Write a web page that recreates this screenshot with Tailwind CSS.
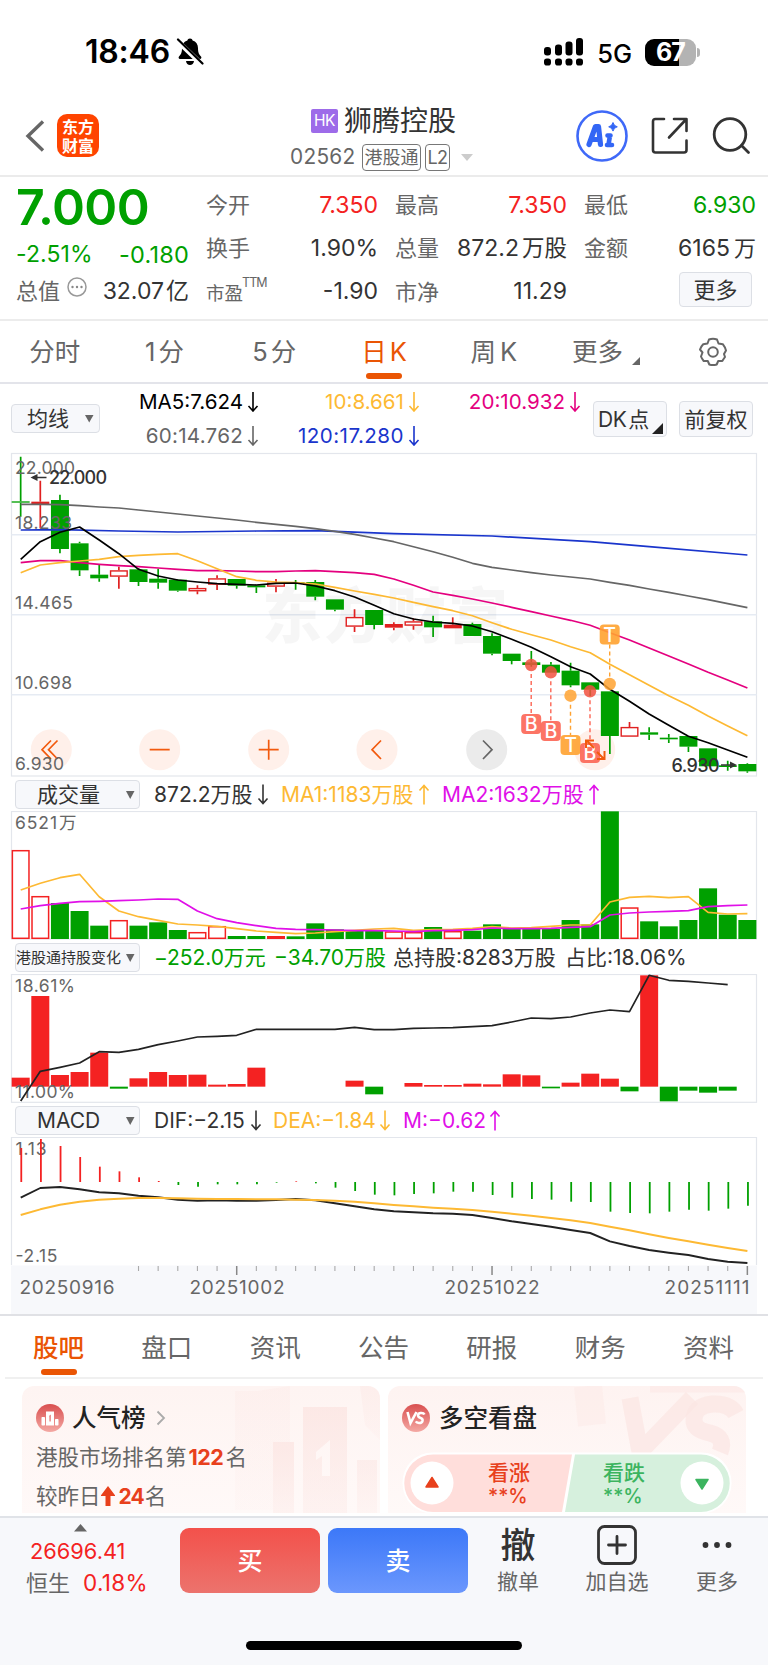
<!DOCTYPE html>
<html lang="zh-CN">
<head>
<meta charset="utf-8">
<title>狮腾控股 02562</title>
<script src="https://cdn.jsdelivr.net/npm/@tailwindcss/browser@4"></script>
</head>
<body class="bg-white">
<div class="w-[768px] h-[1665px] overflow-hidden flex flex-col bg-white font-['Inter','Noto_Sans_CJK_SC',sans-serif] text-[#333] leading-none whitespace-nowrap">

  <!-- status bar -->
  <div class="h-[104px] shrink-0 flex items-center pl-[85px] pr-[68px] text-black">
    <span class="text-[32px] font-semibold tracking-[-0.2px]">18:46</span>
    <svg class="ml-[6px]" width="28" height="30" viewBox="0 0 28 30"><path d="M14 1.500c1.500 0 2.400.9 2.600 2 3.500 1 5.400 3.900 5.400 7.500 0 5 1.200 6.500 3 8.600.8 1 .4 2.400-1 2.400H4c-1.400 0-1.800-1.400-1-2.400 1.800-2.100 3-3.600 3-8.600 0-3.600 1.900-6.500 5.400-7.500.2-1.100 1.100-2 2.600-2zM10 24h8c-.3 2.400-1.900 4-4 4s-3.700-1.600-4-4z"/><path d="M1 3.500l25 24" stroke="#fff" stroke-width="5"/><path d="M2 2.500l24.500 24" stroke="#000" stroke-width="2.200" stroke-linecap="round"/></svg>
    <svg class="ml-auto" width="40" height="28" viewBox="0 0 40 28"><rect x="0" y="9" width="7" height="8.500" rx="3"/><rect x="11" y="6.500" width="7" height="11" rx="3"/><rect x="21.500" y="3.500" width="7" height="14" rx="3"/><rect x="32" y="0" width="7" height="17.500" rx="3"/><rect x="0" y="20.500" width="7" height="7" rx="2.800"/><rect x="11" y="20.500" width="7" height="7" rx="2.800"/><rect x="21.500" y="20.500" width="7" height="7" rx="2.800"/><rect x="32" y="20.500" width="7" height="7" rx="2.800"/></svg>
    <span class="ml-[13px] mt-[3px] text-[25.500px] font-medium">5G</span>
    <div class="ml-[13px] w-[51px] h-[27px] rounded-[9px] bg-[linear-gradient(90deg,#000_67%,#b3b3b3_67%)] text-white text-[25px] font-bold flex items-center justify-center tracking-[-1px]">67</div>
    <div class="ml-[1px] w-[3px] h-[9px] rounded-r-full bg-[#b3b3b3]"></div>
  </div>

  <!-- title bar -->
  <div class="h-[73px] shrink-0 border-b-2 border-[#ebebeb] pb-2 flex items-center">
    <svg class="ml-[25px]" width="20" height="32" viewBox="0 0 20 32" fill="none" stroke="#666" stroke-width="3.400"><path d="M18 1.500L3 16l15 14.500"/></svg>
    <div class="ml-[12px] w-[42px] h-[43px] rounded-[10px] bg-[#ff4400] text-white text-[16px] font-bold leading-[18.500px] text-center flex flex-col justify-center font-['Noto_Sans_CJK_SC',sans-serif]"><span>东方</span><span>财富</span></div>
    <div class="ml-[192px] w-[184px] flex flex-col mt-[6px]">
      <div class="flex items-center pl-[20px] h-[28px] mt-[1px]">
        <span class="w-[27px] h-[24px] bg-[#9d6be9] rounded-[2px] text-white text-[15.500px] flex items-center justify-center tracking-[-0.5px]">HK</span>
        <span class="ml-[6px] text-[28px]">狮腾控股</span>
      </div>
      <div class="flex items-center h-[28px] mt-[9px] text-[#666]">
        <span class="w-[71px] text-[20.800px] tracking-[0.3px] -ml-[1px] mr-[1px]">02562</span>
        <span class="w-[59px] h-[27px] border border-[#777] rounded-[4px] text-[18px] flex items-center justify-center">港股通</span>
        <span class="ml-[4px] w-[25px] h-[27px] border border-[#777] rounded-[4px] text-[18px] flex items-center justify-center tracking-[-0.5px]">L2</span>
        <span class="ml-[11px] border-x-[6px] border-x-transparent border-t-[7px] border-t-[#ccc]"></span>
      </div>
    </div>
    <svg class="ml-[101px]" width="52" height="52" viewBox="0 0 52 52"><circle cx="26" cy="26" r="24.500" fill="#fff" stroke="#3f69f8" stroke-width="2.600"/><g stroke="#3366f5" stroke-linejoin="round" stroke-linecap="round" fill="none"><path d="M13 34.500L19.500 16.500h3L24.500 34.500M16 29.500h8" stroke-width="5.200"/><path d="M34 25.500L32.500 34.500M31.500 25.500h3M31 35h5" stroke-width="4.600"/></g><path d="M37 12.500q.8 3.600 4.300 4.300q-3.500.8-4.300 4.300q-.8-3.500-4.300-4.300q3.500-.7 4.300-4.300z" fill="#3366f5" stroke="#3366f5"/></svg>
    <svg class="ml-[23px]" width="38" height="38" viewBox="0 0 38 38" fill="none" stroke="#333" stroke-width="2.600" stroke-linecap="round" stroke-linejoin="round"><path d="M13 2H4.500Q2 2 2 4.500V33Q2 35.500 4.500 35.500H33Q35.500 35.500 35.500 33V23.500M23 2H35.500V14M35 2.500L18 20.500"/></svg>
    <svg class="ml-[23px]" width="39" height="38" viewBox="0 0 39 38" fill="none" stroke="#333" stroke-width="2.800" stroke-linecap="round"><circle cx="18" cy="17.500" r="15.800"/><path d="M29.500 28.500L36.500 35.500"/></svg>
  </div>

  <!-- quote summary -->
  <div class="h-[144px] shrink-0 border-b-2 border-[#ececec] flex pl-[16px] pr-[12px]">
    <div class="w-[172px] flex flex-col text-[23px]">
      <span class="mt-[5px] text-[50px] font-semibold text-[#00a000] tracking-[-0.600px]">7.000</span>
      <div class="mt-[11px] flex justify-between text-[#00a000]"><span class="tracking-[0.100px]">-2.51%</span><span class="text-[23.500px] tracking-[0.200px] -mr-[1px]">-0.180</span></div>
      <div class="mt-[13px] flex items-center"><span class="text-[22px] text-[#666]">总值</span>
        <svg class="ml-[7px] -mt-[8px]" width="20" height="20" viewBox="0 0 20 20" fill="#888"><circle cx="10" cy="10" r="9" fill="none" stroke="#999" stroke-width="1.500"/><circle cx="5.500" cy="10" r="1.200"/><circle cx="10" cy="10" r="1.200"/><circle cx="14.500" cy="10" r="1.200"/></svg>
        <span class="ml-auto text-[23px] -mr-[1px]">32.07<span class="ml-[2px]">亿</span></span></div>
    </div>
    <div class="ml-[18px] w-[550px] grid grid-cols-3 grid-rows-[44px_43px_41px] gap-x-[17px] pt-[6px] text-[23px]">
      <div class="flex items-center justify-between"><span class="text-[22px] text-[#666]">今开</span><span class="text-[#f42222]">7.350</span></div>
      <div class="flex items-center justify-between"><span class="text-[22px] text-[#666]">最高</span><span class="text-[#f42222]">7.350</span></div>
      <div class="flex items-center justify-between"><span class="text-[22px] text-[#666]">最低</span><span class="text-[#00a000]">6.930</span></div>
      <div class="flex items-center justify-between"><span class="text-[22px] text-[#666] -mt-[2px]">换手</span><span>1.90%</span></div>
      <div class="flex items-center justify-between"><span class="text-[22px] text-[#666] -mt-[2px]">总量</span><span>872.2<span class="ml-[3px] text-[22.500px]">万股</span></span></div>
      <div class="flex items-center justify-between"><span class="text-[22px] text-[#666] -mt-[2px]">金额</span><span>6165<span class="ml-[4px] text-[22px]">万</span></span></div>
      <div class="flex items-center justify-between pt-[2px]"><span class="text-[18.500px] text-[#666] flex pt-[3px]">市盈<span class="text-[12.500px] -mt-[7px] -ml-[1px] tracking-[-0.900px]">TTM</span></span><span>-1.90</span></div>
      <div class="flex items-center justify-between pt-[2px]"><span class="text-[22px] text-[#666]">市净</span><span>11.29</span></div>
      <div class="flex items-center justify-end pr-[4px]"><span class="w-[73px] h-[35px] -mt-[2px] rounded-[4px] border border-[#dcdfe5] bg-[#f7f8fb] flex items-center justify-center text-[22px]">更多</span></div>
    </div>
  </div>

  <!-- period tabs -->
  <div class="h-[63px] shrink-0 border-b-2 border-[#e3e4ea] grid grid-cols-7 text-[25.500px] text-[#666]">
    <div class="flex justify-center pt-[18px]">分时</div>
    <div class="flex justify-center pt-[18px] gap-[3px]"><span>1</span><span>分</span></div>
    <div class="flex justify-center pt-[18px] gap-[3px]"><span>5</span><span>分</span></div>
    <div class="flex flex-col items-center pt-[18px] text-[#ea5504]"><span>日<span class="ml-[3px]">K</span></span><span class="mt-[8px] w-[36px] h-[6px] rounded-full bg-[#ea5504]"></span></div>
    <div class="flex justify-center pt-[18px] gap-[4px]"><span>周</span><span>K</span></div>
    <div class="flex justify-center pt-[18px] pl-[5px]"><span>更多</span><svg class="ml-[9px] mt-[18px]" width="8" height="8"><path d="M8 0V8H0z" fill="#666"/></svg></div>
    <div class="flex justify-center pt-[16px]"><svg width="30" height="30" viewBox="0 0 30 30" fill="none" stroke="#666" stroke-width="2" stroke-linejoin="round"><path d="M11 2.500Q15 1 19 2.500L20.500 6.500L24.800 7.200Q27 10 28 13.500L26 17L27 20Q25.500 22 24.300 24L20.200 24L18.700 27.500Q15 28.700 11.300 27.500L9.800 24L5.700 24Q4 22 3 19.500L4.500 15.500L2 12.500Q3 9.500 5.200 7.200L9.500 6.500z"/><circle cx="15" cy="15" r="4.800"/></svg></div>
  </div>

  <!-- moving average legend -->
  <div class="h-[66px] shrink-0 flex pl-[11px] pr-[15px]">
    <div class="mt-[20px] w-[89px] h-[29px] rounded-[4px] border border-[#dcdfe5] bg-[#f7f8fb] flex items-center pl-[15px] text-[21px]">均线<svg class="ml-[16px]" width="9" height="8"><path d="M0 0H8.500L4.200 7.500z" fill="#666"/></svg></div>
    <div class="grid grid-cols-[159px_161px_161px] grid-rows-[34px_34px] text-[20.600px] mt-[1px] h-[68px]">
      <div class="flex items-center justify-end gap-[4px] text-black"><span>MA5:7.624</span><svg width="12" height="20" viewBox="0 0 12 20" fill="none" stroke="currentColor" stroke-width="1.600"><path d="M6 0V19M1.500 14L6 19L10.500 14"/></svg></div>
      <div class="flex items-center justify-end gap-[4px] text-[#fdb933]"><span>10:8.661</span><svg width="12" height="20" viewBox="0 0 12 20" fill="none" stroke="currentColor" stroke-width="1.600"><path d="M6 0V19M1.500 14L6 19L10.500 14"/></svg></div>
      <div class="flex items-center justify-end gap-[4px] text-[#e4007f]"><span>20:10.932</span><svg width="12" height="20" viewBox="0 0 12 20" fill="none" stroke="currentColor" stroke-width="1.600"><path d="M6 0V19M1.500 14L6 19L10.500 14"/></svg></div>
      <div class="flex items-center justify-end gap-[4px] text-[#666]"><span class="tracking-[0.250px]">60:14.762</span><svg width="12" height="20" viewBox="0 0 12 20" fill="none" stroke="currentColor" stroke-width="1.600"><path d="M6 0V19M1.500 14L6 19L10.500 14"/></svg></div>
      <div class="flex items-center justify-end gap-[4px] text-[#1a35cc]"><span class="tracking-[0.450px]">120:17.280</span><svg width="12" height="20" viewBox="0 0 12 20" fill="none" stroke="currentColor" stroke-width="1.600"><path d="M6 0V19M1.500 14L6 19L10.500 14"/></svg></div>
    </div>
    <div class="ml-auto mt-[17px] flex gap-[12px] text-[21px]">
      <div class="w-[74px] h-[36px] rounded-[4px] border border-[#dcdfe5] bg-[#f7f8fb] flex items-center pl-[4px] gap-[2px]"><span class="tracking-[-0.500px]">DK</span><span>点</span><svg class="mt-[18px] ml-[1px] shrink-0" width="11" height="11"><path d="M11 0V11H0z" fill="#222"/></svg></div>
      <div class="w-[74px] h-[36px] rounded-[4px] border border-[#dcdfe5] bg-[#f7f8fb] flex items-center justify-center">前复权</div>
    </div>
  </div>

  <!-- candlestick chart -->
  <svg id="kline" class="block shrink-0" width="768" height="328" viewBox="0 450 768 328"></svg>

  <!-- volume legend -->
  <div class="h-[33px] shrink-0 flex items-center pl-[15px] text-[21px]">
    <div class="w-[125px] h-[29px] rounded-[4px] border border-[#dcdfe5] bg-[#f7f8fb] flex items-center justify-between pl-[21px] pr-[4px]"><span>成交量</span><svg width="9" height="8"><path d="M0 0H8.500L4.200 8z" fill="#666"/></svg></div>
    <span class="ml-[14px] w-[97px]">872.2万股</span><svg class="ml-[6px]" width="12" height="21" viewBox="0 0 12 20" fill="none" stroke="#333" stroke-width="1.600"><path d="M6 0V19M1.500 14L6 19L10.500 14"/></svg>
    <span class="ml-[12px] w-[133px] text-[#fdb933]">MA1:1183万股</span><svg class="ml-[4px]" width="12" height="21" viewBox="0 0 12 20" fill="none" stroke="#fdb933" stroke-width="1.600"><path d="M6 20V1M1.500 6L6 1L10.500 6"/></svg>
    <span class="ml-[12px] w-[142px] text-[#e010e8]">MA2:1632万股</span><svg class="ml-[4px]" width="12" height="21" viewBox="0 0 12 20" fill="none" stroke="#e010e8" stroke-width="1.600"><path d="M6 20V1M1.500 6L6 1L10.500 6"/></svg>
  </div>
  <svg id="volume" class="block shrink-0" width="768" height="130" viewBox="0 811 768 130"></svg>

  <!-- southbound holdings legend -->
  <div class="h-[33px] shrink-0 flex items-center pl-[15px] text-[21px]">
    <div class="w-[125px] h-[29px] rounded-[4px] border border-[#dcdfe5] bg-[#f7f8fb] flex items-center justify-between pl-[0px] pr-[4px]"><span class="text-[15px]">港股通持股变化</span><svg width="9" height="8"><path d="M0 0H8.500L4.200 8z" fill="#666"/></svg></div>
    <span class="ml-[14px] w-[120px] text-[#00a000] tracking-[-0.080px]">−252.0万元</span>
    <span class="w-[119px] text-[#00a000]">−34.70万股</span>
    <span class="w-[172px]">总持股:8283万股</span>
    <span>占比:18.06%</span>
  </div>
  <svg id="holding" class="block shrink-0" width="768" height="130" viewBox="0 974 768 130"></svg>

  <!-- MACD legend -->
  <div class="h-[33px] shrink-0 flex items-center pl-[15px] text-[21px]">
    <div class="w-[125px] h-[29px] rounded-[4px] border border-[#dcdfe5] bg-[#f7f8fb] flex items-center justify-between pl-[21px] pr-[4px]"><span>MACD</span><svg width="9" height="8"><path d="M0 0H8.500L4.200 8z" fill="#666"/></svg></div>
    <span class="ml-[14px] w-[91px]">DIF:−2.15</span><svg class="ml-[5px]" width="12" height="21" viewBox="0 0 12 20" fill="none" stroke="#333" stroke-width="1.600"><path d="M6 0V19M1.500 14L6 19L10.500 14"/></svg>
    <span class="ml-[11px] w-[102px] text-[#fdb933]">DEA:−1.84</span><svg class="ml-[4px]" width="12" height="21" viewBox="0 0 12 20" fill="none" stroke="#fdb933" stroke-width="1.600"><path d="M6 0V19M1.500 14L6 19L10.500 14"/></svg>
    <span class="ml-[12px] w-[82px] text-[#e010e8]">M:−0.62</span><svg class="ml-[4px]" width="12" height="21" viewBox="0 0 12 20" fill="none" stroke="#e010e8" stroke-width="1.600"><path d="M6 20V1M1.500 6L6 1L10.500 6"/></svg>
  </div>
  <svg id="macd" class="block shrink-0" width="768" height="177" viewBox="0 1137 768 177"></svg>

  <!-- section tabs -->
  <div class="h-[63px] shrink-0 border-t-2 border-[#e0e1e5] flex justify-between pl-[33px] pr-[34px] pt-[19px] text-[25.500px] text-[#666]">
    <div class="flex flex-col items-center text-[#ea5504] font-medium"><span>股吧</span><span class="mt-[8px] w-[36px] h-[6px] rounded-full bg-[#ea5504]"></span></div>
    <span>盘口</span><span>资讯</span><span>公告</span><span>研报</span><span>财务</span><span>资料</span>
  </div>
  <div class="h-[2px] shrink-0 mx-[5px] bg-[#f0f0f0]"></div>

  <!-- cards -->
  <div class="h-[137px] shrink-0 flex gap-[8px] pl-[22px] pr-[22px] pt-[7px] pb-[3px]">
    <div class="relative w-[358px] rounded-t-[12px] overflow-hidden bg-[linear-gradient(#fef4f2,#fff9f8)] pl-[14px] pt-[18px]">
      <svg class="absolute inset-0" width="358" height="127" viewBox="22 1386 358 127"><defs><linearGradient id="fa" x1="0" y1="0" x2="0" y2="1"><stop offset="0" stop-color="#fbe3e0" stop-opacity=".7"/><stop offset="1" stop-color="#fbe3e0" stop-opacity=".3"/></linearGradient></defs><g fill="url(#fa)"><path d="M257 1391L290 1386V1442H273V1510H235V1391z" opacity=".35"/><rect x="273" y="1442" width="21" height="72"/><path d="M303 1407H347V1513H303zM316 1452L330 1440V1476H322V1456L316 1460z" fill-rule="evenodd"/><rect x="357" y="1460" width="20" height="54" opacity=".7"/><path d="M360 1386H380V1440L365 1425z" opacity=".5"/></g></svg>
      <div class="relative flex items-center h-[28px]">
        <svg width="28" height="28" viewBox="0 0 28 28"><defs><linearGradient id="ic" x1="0" y1="0" x2="0" y2="1"><stop offset="0" stop-color="#d94f4f"/><stop offset="1" stop-color="#f4a9a4"/></linearGradient></defs><circle cx="14" cy="14" r="14" fill="url(#ic)"/><g fill="#fff"><rect x="5.500" y="13" width="3.500" height="8.500" rx=".8"/><path d="M10 7.500H18V21.500H10zM13 12L14.800 10.500V17.500H13.400V12.500z" fill-rule="evenodd"/><rect x="19" y="15" width="3.500" height="6.500" rx=".8"/></g></svg>
        <span class="ml-[8px] text-[24.500px] font-medium text-[#222]">人气榜</span>
        <svg class="ml-[10px]" width="10" height="16" viewBox="0 0 10 16" fill="none" stroke="#aaa" stroke-width="1.800"><path d="M1.500 1.500L8 8L1.500 14.500"/></svg>
      </div>
      <div class="relative mt-[15px] text-[21.500px] text-[#666]">港股市场排名第<span class="font-bold text-[#e8401c] text-[21.500px] ml-[2px] mr-[2px] tracking-[-0.500px]">122</span>名</div>
      <div class="relative mt-[17px] flex items-center text-[21.500px] text-[#666]">较昨日<svg width="14" height="20" viewBox="0 0 14 20" fill="#e8401c"><path d="M7 0L14.500 10H9.500V20H4.500V10H-.5z"/></svg><span class="ml-[4px] font-bold text-[#e8401c] text-[21px] mr-[1px] tracking-[-1px]">24</span>名</div>
    </div>
    <div class="relative w-[358px] rounded-t-[12px] overflow-hidden bg-[linear-gradient(#fef3f1,#fff9f8)] pl-[14px] pt-[18px]">
      <svg class="absolute inset-0" width="358" height="127" viewBox="388 1386 358 127"><g fill="none" stroke="#fbe6e3"><path d="M630 1398L640 1452L692 1398" stroke-width="17" opacity=".7"/><path d="M736 1414Q730 1403 712 1404Q694 1406 694 1420Q694 1430 710 1433Q726 1437 720 1452" stroke-width="17" opacity=".7"/><path d="M588 1386L592 1425" stroke-width="28" opacity=".35"/><path d="M650 1388H746" stroke-width="9" opacity=".5"/></g></svg>
      <div class="relative flex items-center h-[28px]">
        <svg width="28" height="28" viewBox="0 0 28 28"><circle cx="14" cy="14" r="14" fill="url(#ic)"/><g fill="none" stroke="#fff" stroke-width="2.600"><path d="M5.500 8L8.500 19L14.500 8"/><path d="M22.500 10.500Q21.500 8.600 18.500 9Q15.600 9.600 16 11.800Q16.300 13.300 18.600 13.900Q21 14.600 20.500 16.800Q19.800 19.200 17 19Q14.700 18.800 13.800 17.300"/></g></svg>
        <span class="ml-[9px] text-[24.500px] font-medium text-[#222]">多空看盘</span>
      </div>
      <div class="relative mt-[20px] w-[330px] h-[62px]">
        <svg class="absolute inset-0" width="330" height="62" viewBox="402 1452 330 62"><rect x="402.500" y="1452.500" width="329" height="61" rx="30" fill="#fff"/><path d="M433 1454.500H572L562 1512H433A28.700 28.700 0 0 1 433 1454.500z" fill="#ffdedb"/><path d="M575 1454.500H701A28.700 28.700 0 0 1 701 1512H565z" fill="#d6f0dd"/><circle cx="432" cy="1483" r="21.500" fill="#fff"/><circle cx="702" cy="1483" r="21.500" fill="#fff"/><path d="M432 1477.500L438 1487H426z" fill="#e8401c" stroke="#e8401c" stroke-width="1.500" stroke-linejoin="round"/><path d="M702 1489L708 1479.500H696z" fill="#3cb45f" stroke="#3cb45f" stroke-width="1.500" stroke-linejoin="round"/></svg>
        <div class="relative grid grid-cols-2 text-[21px] pt-[10px] font-medium">
          <div class="pl-[86px] text-[#e8401c]"><div>看涨</div><div class="mt-[4px] text-[19.500px]">**%</div></div>
          <div class="pl-[36px] text-[#3cb45f]"><div>看跌</div><div class="mt-[4px] text-[19.500px]">**%</div></div>
        </div>
      </div>
    </div>
  </div>

  <!-- bottom bar -->
  <div class="h-[149px] shrink-0 border-t-2 border-[#e0e3e8] bg-[#f7f8fb] flex flex-col">
    <div class="flex h-[123px] items-start">
      <div class="w-[180px] pt-[6px] flex flex-col text-[#f42222] text-[21.800px]">
        <svg class="ml-[74px]" width="13" height="8"><path d="M6.500 0L13 7.500H0z" fill="#666"/></svg>
        <span class="mt-[9px] ml-[30px]">26696.41</span>
        <div class="mt-[9px] ml-[26px] flex"><span class="text-[#666] text-[22px] w-[57px]">恒生</span><span class="text-[22.500px] tracking-[0.300px]">0.18%</span></div>
      </div>
      <div class="mt-[10px] w-[140px] h-[65px] rounded-[9px] bg-[linear-gradient(#f3514b,#ec736d)] text-white text-[25px] font-medium flex items-center justify-center pt-[2px]">买</div>
      <div class="mt-[10px] ml-[8px] w-[140px] h-[65px] rounded-[9px] bg-[linear-gradient(#3c78f8,#6b97fd)] text-white text-[25px] font-medium flex items-center justify-center pt-[2px]">卖</div>
      <div class="ml-[29px] w-[42px] pt-[10px] flex flex-col items-center text-[21px] text-[#666]"><span class="text-[35px] font-medium text-[#333]">撤</span><span class="mt-[8px]">撤单</span></div>
      <div class="ml-[46px] w-[64px] pt-[7px] flex flex-col items-center text-[21px] text-[#666]"><svg width="40" height="40" viewBox="0 0 40 40" fill="none" stroke="#333" stroke-width="2.800" stroke-linecap="round"><rect x="1.500" y="1.500" width="37" height="37" rx="6"/><path d="M11.500 20h17M20 11.500v17"/></svg><span class="mt-[6px]">加自选</span></div>
      <div class="ml-[47px] w-[42px] pt-[7px] flex flex-col items-center text-[21px] text-[#666]"><svg width="40" height="40" viewBox="0 0 40 40" fill="#333"><circle cx="8.500" cy="20" r="2.900"/><circle cx="20" cy="20" r="2.900"/><circle cx="31.500" cy="20" r="2.900"/></svg><span class="mt-[6px]">更多</span></div>
    </div>
    <div class="mx-auto w-[276px] h-[9px] rounded-full bg-black"></div>
  </div>
</div>

<script>
const G = '#00a000', R = '#e02020', HOT = '#f42222';
const x = i => 20.67 + 19.64 * i;
const py = (base, v) => base + v / 3;
const path = (base, pts, color, w = 1.7) =>
  `<polyline points="${pts.map(([i, v]) => x(i).toFixed(1) + ',' + py(base, v).toFixed(1)).join(' ')}" fill="none" stroke="${color}" stroke-width="${w}" stroke-linejoin="round"/>`;
const seq = a => a.map((v, i) => [i, v]);
const label = (s, lx, y, len, color = '#666', size = 17.5, extra = '') =>
  `<text x="${lx}" y="${y}" font-size="${size}" fill="${color}" textLength="${len}" ${extra}>${s}</text>`;
const frame = (y1, y2) => `<rect x="11.5" y="${y1}" width="745" height="${y2 - y1}" fill="none" stroke="#e3e6ec" stroke-width="1.2"/>`;

/* ---- candlesticks: [kind, high, top, bottom, low] ---- */
const candles = [['g',20,154,158,200],['s',92,155,162,235],['g',134,150,297,310],['g',275,280,361,378],['g',345,374,385,395],['r',350,361,380,416],['g',355,358,396,408],['g',356,386,398,416],['g',388,389,422,425],['r',406,414,424,433],['r',376,385,404,420],['g',387,387,407,416],['g',405,406,412,429],['r',387,398,410,427],['g',390,397,400,419],['g',390,396,440,451],['g',448,448,479,484],['r',478,501,530,546],['g',480,480,525,538],['s',517,522,533,541],['r',505,514,527,539],['g',497,514,532,561],['s',502,524,535,535],['g',518,522,558,558],['g',550,558,611,616],['g',611,611,633,643],['g',603,637,645,650],['g',636,644,668,668],['g',638,662,706,712],['g',697,697,719,738],['g',724,724,858,912],['r',816,831,860,860],['g',832,847,854,870],['g',852,863,868,879],['g',858,858,890,906],['g',895,895,949,949],['g',932,946,951,962],['g',940,942,964,968]];
const ma5 = [328,275,247,231,270,311,358,378,390,396,401,403,405,400,399,408,422,441,466,491,507,516,520,528,545,568,592,620,650,672,718,754,792,826,859,878,900,922];
const ma10 = [368,345,338,333,328,320,316,313,311,332,356,380,391,396,398,402,412,423,433,444,457,470,482,497,518,538,554,570,590,608,643,674,706,737,766,798,828,857];
const ma20 = [338,332,332,338,343,347,350,354,358,362,362,363,365,365,363,362,365,368,373,387,406,426,436,447,459,472,485,498,511,526,548,570,594,618,642,667,690,714];
const ma60 = [163,163,164,167,171,174,180,186,192,198,204,210,217,223,229,236,244,253,264,275,290,305,322,340,352,360,368,375,381,387,397,406,417,427,438,449,461,473];
const ma120 = [[0,240],[2,239],[5,243],[8,246],[12,243],[15,242],[19,251],[24,258],[29,275],[32,290],[37,315]];
let k = frame(453.5, 776) + '<path d="M11.5 534.7H756.5M11.500 614.700H756.500M11.500 694.700H756.500" stroke="#e6ebf3" stroke-width="1.6"/>';
k += '<text x="262" y="638" font-size="60" font-weight="900" fill="#000" fill-opacity=".035" textLength="246">东方财富</text>';
[51.3,159.7,268.7,377].forEach(cx => k += `<circle cx="${cx}" cy="749.7" r="20.5" fill="#fff0ea"/>`);
k += '<circle cx="486.7" cy="749.7" r="20.500" fill="#ebebeb"/><circle cx="594.7" cy="749.7" r="20.500" fill="#fff0ea"/>';
k += '<g fill="none" stroke="#f25a0e" stroke-width="1.7"><path d="M51 740.500L42 749.700L51 759M57.500 740.500L48.500 749.700L57.500 759M149.700 749.700H169.700M258.700 749.700H278.700M268.700 739.700V759.700M381 740.500L372 749.700L381 759"/></g><path d="M483 740.500L492 749.700L483 759" fill="none" stroke="#666" stroke-width="1.7"/>';
candles.forEach(([t, h, a, b, l], i) => {
  const c = t === 'g' ? G : R, X = x(i), A = py(450, a), B = py(450, b), H = py(450, h), L = py(450, l);
  k += `<path d="M${X} ${H}V${A}M${X} ${B}V${L}" stroke="${c}" stroke-width="1.7"/>`;
  k += t === 'r'
    ? `<rect x="${X - 8.300}" y="${A + .6}" width="16.600" height="${Math.max(B - A - 1.2, 1)}" fill="#fff" stroke="${c}" stroke-width="1.400"/>`
    : `<rect x="${X - 9}" y="${A}" width="18" height="${B - A}" fill="${c}"/>`;
});
k += path(450, ma120, '#1a35cc') + path(450, seq(ma60), '#666') + path(450, seq(ma20), '#e4007f') + path(450, seq(ma10), '#fdb933') + path(450, seq(ma5), '#000');
k += label('22.000', 15, 473.5, 60) + label('18.233', 15, 528.700, 57) + label('14.465', 15, 608.700, 58) + label('10.698', 15, 689.300, 57) + label('6.930', 15, 770, 49);
k += label('22.000', 49, 484, 58, '#333', 18, 'font-weight="500"') + '<path d="M33 477.500H46.500" stroke="#333" stroke-width="1.500"/><path d="M30.500 477.500L37.500 474V481z" fill="#333"/>';
k += label('6.930', 671.500, 771.500, 48, '#333', 18, 'font-weight="500"') + '<path d="M721 765H734" stroke="#333" stroke-width="1.500"/><path d="M737 765L730 761.500V768.500z" fill="#333"/>';
/* trade markers: [letter, x, dotY, boxY] */
[['B',531.2,665,724],['B',550.8,672.300,731],['T',570.5,695.700,745],['T',609.7,684,634.500],['B',590,691.300,753]].forEach(([s, mx, d, b]) => {
  const c = s === 'B' ? '#fc6554' : '#ffa230';
  const y1 = b > d ? d + 9 : b + 10, y2 = b > d ? b - 10 : d - 6;
  k += `<path d="M${mx} ${y1}V${y2}" stroke="${c}" stroke-width="1.4" stroke-dasharray="4 3"/><circle cx="${mx}" cy="${d}" r="6.2" fill="${s === 'B' ? '#f25140' : '#ffa230'}" fill-opacity=".85"/><rect x="${mx - 10}" y="${b - 10}" width="20" height="20" rx="4" fill="${c}" fill-opacity=".9"/><text x="${mx}" y="${b + 7}" font-size="19.500" font-weight="500" fill="#fff" text-anchor="middle">${s}</text>`;
});
k += '<g fill="none" stroke="#f25a0e" stroke-width="2"><path d="M594 748L586.500 740.500M586 748V740.500H594M597 752L604 759M604.500 751V759H597"/></g>';
document.getElementById('kline').innerHTML = k;

/* ---- volume ---- */
const vol = ['r240','r378','g399','g423','g467','r450','g467','g457','g480','r486','r468','g498','g498','s498','g499','g460','g478','g483','g483','r484','r486','g471','r483','g482','g463','g477','g477','g477','g450','g463','g124','r412','g454','g469','g450','g355','g434','g450'];
let v = frame(811.5, 939);
vol.forEach((s, i) => {
  const t = s[0], y = py(770, +s.slice(1)), h = 939 - y;
  v += t === 'r' ? `<rect x="${x(i) - 8.300}" y="${y + .7}" width="16.600" height="${h - 1.4}" fill="#fff" stroke="${HOT}" stroke-width="1.500"/>`
    : `<rect x="${x(i) - 9}" y="${y}" width="18" height="${h}" fill="${t === 'g' ? G : HOT}"/>`;
});
v += path(770, seq([360,340,323,313,380,423,440,451,462,465,469,476,483,487,491,489,485,481,477,475,481,479,478,475,470,474,473,469,465,465,396,382,379,383,380,427,432,431]), '#fdb933');
v += path(770, seq([417,407,400,395,394,392,390,387,388,423,446,458,467,475,478,479,480,482,482,483,485,482,481,479,474,476,476,475,472,470,435,429,426,424,422,410,407,405]), '#e010e8');
v += label('6521', 15, 829, 42) + label('万', 59, 829, 17);
document.getElementById('volume').innerHTML = v;

/* ---- southbound holding change ---- */
const hold = [413,168,405,396,338,446,415,396,405,404,434,432,383,0,0,0,0,422,463,0,429,435,435,431,433,403,406,445,428,401,416,454,106,484,452,458,452];
let o = frame(974.5, 1102.3);
hold.forEach((z, i) => {
  if (!z) return;
  const up = z < 440, y = py(940, up ? z : 440);
  o += `<rect x="${x(i) - 9}" y="${y}" width="18" height="${Math.abs(z - 440) / 3}" fill="${up ? HOT : G}"/>`;
});
o += label('18.61%', 15, 992, 60) + label('11.00%', 15, 1098, 60);
o += path(940, seq([483,394,382,369,335,337,328,314,303,291,289,286,268,268,268,268,268,262,269,269,265,264,263,260,257,246,234,236,231,219,210,215,106,121,124,129,134]), '#222');
document.getElementById('holding').innerHTML = o;

/* ---- MACD ---- */
const bars = [114,87,108,141,170,184,202,213,225,230,223,223,223,218,214,220,233,243,254,256,252,250,245,245,255,263,267,269,275,276,305,309,310,305,299,302,296,287];
let m = '<rect x="11" y="1265.500" width="746" height="49" fill="#f7f8fb"/><path d="M11.500 1265V1137.500H756.500V1265" fill="none" stroke="#e3e6ec" stroke-width="1.200"/>';
m += label('1.13', 15.500, 1155, 31) + label('-2.15', 15.500, 1261.500, 42);
bars.forEach((z, i) => m += `<path d="M${x(i) + .6} 1182V${py(1110, z)}" stroke="${z < 216 ? HOT : G}" stroke-width="1.8"/>`);
m += path(1110, seq([263,234,231,238,247,250,257,262,269,272,271,272,272,270,267,271,280,289,298,304,307,310,311,315,324,334,342,350,360,369,394,408,420,428,435,447,455,459]), '#222', 1.9);
m += path(1110, seq([315,298,284,275,269,266,264,264,265,266,267,267,268,268,269,270,272,275,280,285,289,293,296,300,305,311,317,324,331,339,350,361,373,384,394,404,414,423]), '#fdb933', 1.9);
for (let i = 6; i < 38; i++) {
  const big = i === 11 || i === 24 || i === 37;
  m += `<path d="M${x(i)} 1266V${big ? 1275 : 1271}" stroke="${big ? '#888' : '#aaa'}" stroke-width="${big ? 1.500 : 1.100}"/>`;
}
m += label('20250916', 19.500, 1293.500, 95, '#666', 19) + label('20251002', 189.500, 1293.500, 95, '#666', 19) + label('20251022', 444.500, 1293.500, 95, '#666', 19) + label('20251111', 664.500, 1293.500, 85, '#666', 19);
document.getElementById('macd').innerHTML = m;
</script>
</body>
</html>
